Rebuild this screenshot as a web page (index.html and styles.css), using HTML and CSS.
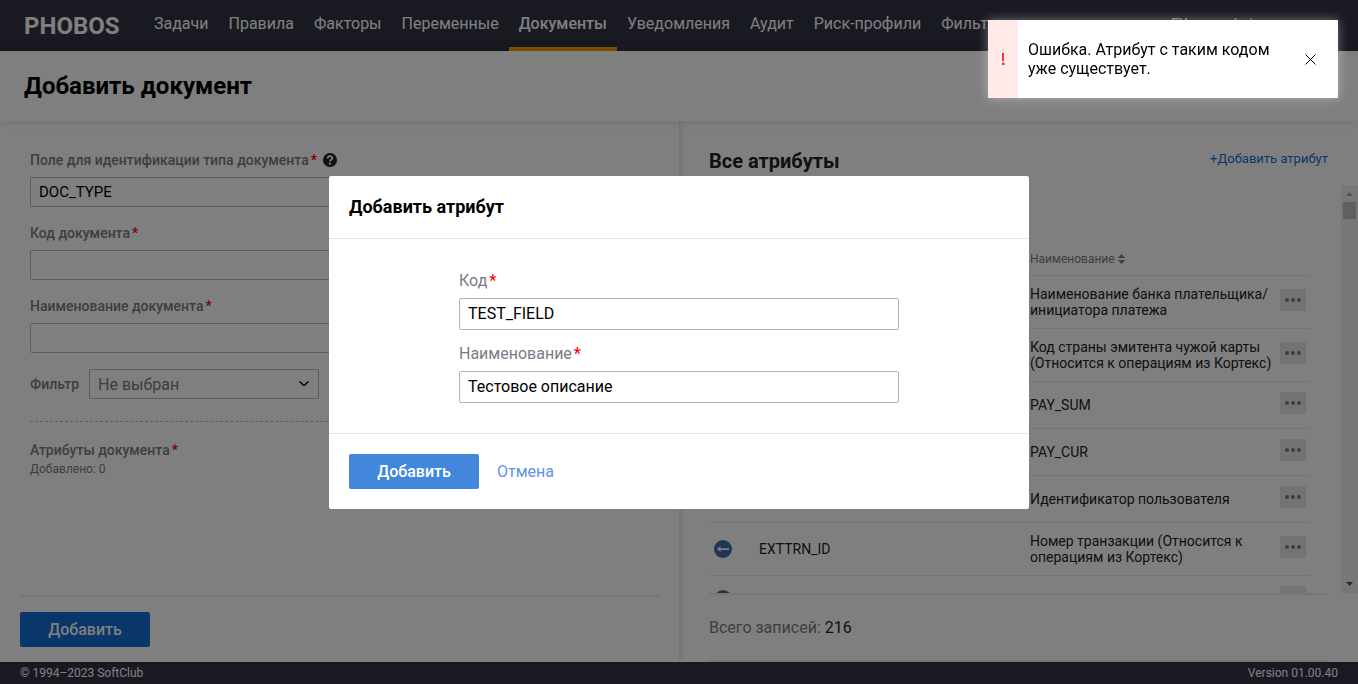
FILE: index.html
```html
<!DOCTYPE html>
<html lang="ru">
<head>
<meta charset="utf-8">
<title>PHOBOS</title>
<link rel="stylesheet" href="styles.css">
</head>
<body>
<svg class="sprite">
  <symbol id="arrow-left" viewBox="0 0 18 18"><circle cx="9" cy="9" r="9" fill="#406ea8"/><path d="M3 9l3.500-3v2.200H15v1.800H6.500V12z" fill="#fff"/></symbol>
  <symbol id="dots" viewBox="0 0 18 6"><circle cx="3" cy="3" r="2"/><circle cx="9" cy="3" r="2"/><circle cx="15" cy="3" r="2"/></symbol>
</svg>
<div class="app">
  <header class="topbar">
    <div class="logo">PHOBOS</div>
    <nav class="nav">
      <a href="#">Задачи</a>
      <a href="#">Правила</a>
      <a href="#">Факторы</a>
      <a href="#">Переменные</a>
      <a href="#" class="active">Документы</a>
      <a href="#">Уведомления</a>
      <a href="#">Аудит</a>
      <a href="#">Риск-профили</a>
      <a href="#">Фильтры</a>
    </nav>
    <div class="user">ГУ user admin</div>
  </header>
  <div class="titlebar"><h1>Добавить документ</h1></div>
  <main class="columns">
    <section class="doc">
      <form class="doc-form">
        <div class="field">
          <div class="label-row">
            <label for="type">Поле для идентификации типа документа<b class="req">*</b></label>
            <svg class="help" viewBox="0 0 14 14"><circle cx="7" cy="7" r="7" fill="#222"/><path d="M4.800 5.500c0-3 4.500-3 4.500-.3C9.300 6.800 7 6.800 7 8.500" fill="none" stroke="#fff" stroke-width="1.800"/><circle cx="7" cy="10.700" r="1.100" fill="#fff"/></svg>
          </div>
          <input id="type" class="text-input" value="DOC_TYPE">
        </div>
        <div class="field">
          <div class="label-row"><label for="code">Код документа<b class="req">*</b></label></div>
          <input id="code" class="text-input">
        </div>
        <div class="field">
          <div class="label-row"><label for="name">Наименование документа<b class="req">*</b></label></div>
          <input id="name" class="text-input">
        </div>
        <div class="filter-row">
          <label for="filter">Фильтр</label>
          <div class="select-wrap">
            <select id="filter"><option>Не выбран</option></select>
            <svg class="chevron" viewBox="0 0 10 6"><path d="M.5.5L5 4.500 9.500.5" fill="none" stroke="#222" stroke-width="1.600"/></svg>
          </div>
        </div>
        <div class="attrs">
          <div class="attrs-title">Атрибуты документа<b class="req">*</b></div>
          <div class="attrs-count">Добавлено: 0</div>
        </div>
      </form>
      <div class="doc-actions"><button class="btn-dark">Добавить</button></div>
    </section>
    <section class="all">
      <div class="all-head">
        <h2>Все атрибуты</h2>
        <a href="#">+Добавить атрибут</a>
      </div>
      <div class="list">
        <div class="list-view">
          <table>
            <colgroup><col class="c-icon"><col class="c-code"><col><col class="c-act"></colgroup>
            <thead><tr><th></th><th>Код</th><th>Наименование <svg class="sort" viewBox="0 0 7 10"><path d="M3.500 0L6 3H1zM3.500 10L6 7H1zM0 3h7v1H0zM0 6h7v1H0z"/></svg></th><th></th></tr></thead>
            <tbody>
              <tr><td><svg class="add"><use href="#arrow-left"/></svg></td><td>BANK_NAME</td><td>Наименование банка плательщика/инициатора платежа</td><td><button class="more" aria-label="Действия"><svg><use href="#dots"/></svg></button></td></tr>
              <tr><td><svg class="add"><use href="#arrow-left"/></svg></td><td>COUNTRY</td><td>Код страны эмитента чужой карты (Относится к операциям из Кортекс)</td><td><button class="more" aria-label="Действия"><svg><use href="#dots"/></svg></button></td></tr>
              <tr><td><svg class="add"><use href="#arrow-left"/></svg></td><td>PAY_SUM</td><td>PAY_SUM</td><td><button class="more" aria-label="Действия"><svg><use href="#dots"/></svg></button></td></tr>
              <tr><td><svg class="add"><use href="#arrow-left"/></svg></td><td>PAY_CUR</td><td>PAY_CUR</td><td><button class="more" aria-label="Действия"><svg><use href="#dots"/></svg></button></td></tr>
              <tr><td><svg class="add"><use href="#arrow-left"/></svg></td><td>USER_ID</td><td>Идентификатор пользователя</td><td><button class="more" aria-label="Действия"><svg><use href="#dots"/></svg></button></td></tr>
              <tr><td><svg class="add"><use href="#arrow-left"/></svg></td><td>EXTTRN_ID</td><td>Номер транзакции (Относится к операциям из Кортекс)</td><td><button class="more" aria-label="Действия"><svg><use href="#dots"/></svg></button></td></tr>
              <tr><td><svg class="add"><use href="#arrow-left"/></svg></td><td></td><td></td><td><button class="more" aria-label="Действия"><svg><use href="#dots"/></svg></button></td></tr>
            </tbody>
          </table>
        </div>
        <div class="scrollbar">
          <svg viewBox="0 0 17 17"><path d="M5 11h7L8.500 7z" fill="#a3a3a3"/></svg>
          <div class="thumb"></div>
          <svg class="down" viewBox="0 0 17 17"><path d="M5 6h7l-3.500 4z" fill="#505050"/></svg>
        </div>
      </div>
      <div class="total">Всего записей: <span>216</span></div>
    </section>
  </main>
  <footer class="footer"><span>© 1994–2023 SoftClub</span><span>Version 01.00.40</span></footer>
</div>
<div class="overlay">
  <form class="modal" role="dialog" aria-labelledby="modal-title">
    <h3 id="modal-title">Добавить атрибут</h3>
    <div class="modal-body">
      <div class="modal-field">
        <label for="attr-code">Код<b class="req">*</b></label>
        <input id="attr-code" value="TEST_FIELD">
      </div>
      <div class="modal-field">
        <label for="attr-name">Наименование<b class="req">*</b></label>
        <input id="attr-name" value="Тестовое описание">
      </div>
    </div>
    <div class="modal-foot">
      <button type="button" class="btn">Добавить</button>
      <button type="button" class="cancel">Отмена</button>
    </div>
  </form>
</div>
<div class="toast" role="alert">
  <div class="toast-mark"><svg viewBox="0 0 4 12"><path d="M1 0h2v8H1zM1 9.500h2.500V12H1z" fill="#ff3232"/></svg></div>
  <p>Ошибка. Атрибут с таким кодом уже существует.</p>
  <button class="close" aria-label="Закрыть"><svg viewBox="0 0 11 11"><path d="M.5.5l10 10M10.500.5l-10 10" stroke="#000" fill="none"/></svg></button>
</div>
</body>
</html>
```
FILE: styles.css
```css
* { box-sizing: border-box; }
body { margin: 0; font-family: Roboto, "Liberation Sans", sans-serif; font-size: 14px; color: #222; background: #fff; overflow: hidden; }
button, input, select { font-family: inherit; color: inherit; }
button { border: 0; padding: 0; background: none; }
h1, h2, h3, p { margin: 0; }
a { color: inherit; text-decoration: none; }
svg { display: block; }
.sprite { display: none; }

.app { display: flex; flex-direction: column; height: 100vh; }
.topbar { display: flex; flex: none; height: 51px; padding: 0 24px; background: #323244; color: #fff; overflow: hidden; white-space: nowrap; }
.logo { width: 120px; font-size: 24px; font-weight: 700; line-height: 52px; color: #fff; }
.nav { display: flex; font-size: 16px; line-height: 47px; }
.nav a { padding: 0 10px; border-bottom: 4px solid transparent; }
.nav .active { font-weight: 500; border-bottom-color: #ffa200; }
.user { margin-left: auto; width: 163px; line-height: 48px; }

.titlebar { flex: none; height: 70px; padding: 0 24px; line-height: 70px; position: relative; box-shadow: 0 0 10px rgba(0, 0, 0, .15); }
h1 { font-size: 24px; line-height: inherit; color: #000; }

.columns { display: grid; grid-template-columns: 1fr 1fr; flex: 1; min-height: 0; }
.doc { display: flex; flex-direction: column; min-height: 0; box-shadow: 0 0 8px rgba(0, 0, 0, .2); clip-path: inset(0 -12px 0 0); }
.doc-form { flex: 1; padding: 28px 30px 0; }
.field { margin-bottom: 15px; }
.label-row { display: flex; align-items: center; gap: 6px; height: 22px; margin-bottom: 6px; }
label, .attrs-title { font-size: 14px; font-weight: 500; color: #7b7b88; }
.req { color: #f00; font-weight: 500; margin-left: 2px; }
.help { width: 14px; height: 14px; }
.text-input { display: block; width: 100%; height: 30px; padding: 0 8px; font-size: 15px; color: #000; background: #fff; border: 1px solid #b8bac8; border-radius: 2px; }
.filter-row { display: flex; align-items: center; gap: 10px; padding: 1px 0 22px; border-bottom: 1px dashed #bbb; }
.select-wrap { position: relative; width: 230px; }
select { display: block; width: 100%; height: 30px; padding: 0 8px; font-size: 16px; color: #7b7b7b; background: #fff; border: 1px solid #b8bac8; border-radius: 2px; appearance: none; }
.chevron { position: absolute; right: 10px; top: 12px; width: 10px; height: 6px; }
.attrs { padding-top: 18px; }
.attrs-title { line-height: 20px; }
.attrs-count { font-size: 12px; line-height: 18px; color: #7b7b88; }
.doc-actions { margin: 0 20px; padding: 15px 0; border-top: 2px solid #ececec; }
.btn, .btn-dark { display: block; width: 130px; height: 35px; border-radius: 2px; font-size: 16px; font-weight: 500; color: #fff; background: #4387dc; }
.btn-dark { background: #126cd6; }

.all { display: flex; flex-direction: column; min-height: 0; padding-left: 30px; }
.all-head { display: flex; align-items: center; justify-content: space-between; flex: none; height: 64px; padding: 16px 30px 0 0; }
h2 { font-size: 20px; }
.all-head a { font-size: 13px; color: #126cd6; padding-bottom: 6px; }
.list { display: flex; flex: 1; min-height: 0; }
.list-view { flex: 1; overflow: hidden; margin-right: 13px; padding-right: 17px; border-bottom: 2px solid #ececec; }
table { width: 100%; table-layout: fixed; border-collapse: collapse; }
.c-icon { width: 50px; }
.c-code { width: 271px; }
.c-act { width: 31px; }
th { height: 90px; padding: 0 0 8px; vertical-align: bottom; text-align: left; font-size: 12px; font-weight: 400; line-height: 15px; color: #7b7b88; }
td { height: 47px; padding: 10px 0; line-height: 16px; border-top: 1px solid #e8e8e8; }
td:nth-child(3) { padding-right: 4px; }
.sort { display: inline-block; width: 7px; height: 10px; vertical-align: -1px; fill: #7b7b88; }
.add { width: 18px; height: 18px; margin: 0 5px; }
.more { display: flex; align-items: center; justify-content: center; width: 26px; height: 22px; margin-bottom: 3px; background: #e6e6e6; border-radius: 1px; fill: #7b7b88; }
.more svg { width: 18px; height: 6px; }
.scrollbar { display: flex; flex-direction: column; width: 17px; margin-bottom: 2px; background: #f1f1f1; }
.scrollbar svg { width: 17px; height: 17px; }
.thumb { height: 17px; margin: 0 2px; background: #c1c1c1; }
.down { margin-top: auto; }
.total { flex: none; height: 67px; margin-right: 30px; border-bottom: 2px solid #ececec; font-size: 16px; line-height: 65px; color: #7b7b88; }
.total span { color: #222; }

.footer { display: flex; justify-content: space-between; flex: none; height: 22px; padding: 0 20px; font-size: 12px; line-height: 22px; color: #fff; background: #323244; }

.overlay { position: fixed; inset: 0; z-index: 5; display: flex; align-items: center; justify-content: center; background: rgba(0, 0, 0, .5); }
.modal { width: 700px; background: #fff; border-radius: 2px; }
h3 { padding: 0 20px; font-size: 18px; line-height: 62px; color: #000; border-bottom: 1px solid #e4e4e4; }
.modal-body { display: grid; gap: 12px; padding: 30px 130px; }
.modal-field label { display: block; margin-bottom: 6px; font-size: 16px; font-weight: 400; line-height: 23px; }
.modal-field input { display: block; width: 100%; height: 32px; padding: 0 8px; font-size: 16px; color: #000; border: 1px solid #b0b4c0; border-radius: 2px; }
.modal-foot { display: flex; align-items: center; gap: 18px; padding: 20px; border-top: 1px solid #e4e4e4; }
.cancel { font-size: 16px; color: #5f92ec; }

.toast { position: fixed; z-index: 9; top: 20px; right: 20px; display: flex; align-items: stretch; width: 350px; height: 78px; background: #fff; box-shadow: 0 0 10px rgba(255, 255, 255, .4); }
.toast-mark { display: flex; align-items: center; justify-content: center; width: 30px; background: #ffe9e9; }
.toast-mark svg { width: 4px; height: 12px; }
.toast p { flex: 1; align-self: center; padding: 0 10px; font-size: 16px; line-height: 19px; color: #000; }
.close { display: flex; align-items: center; justify-content: center; width: 56px; }
.close svg { width: 11px; height: 11px; }
```
